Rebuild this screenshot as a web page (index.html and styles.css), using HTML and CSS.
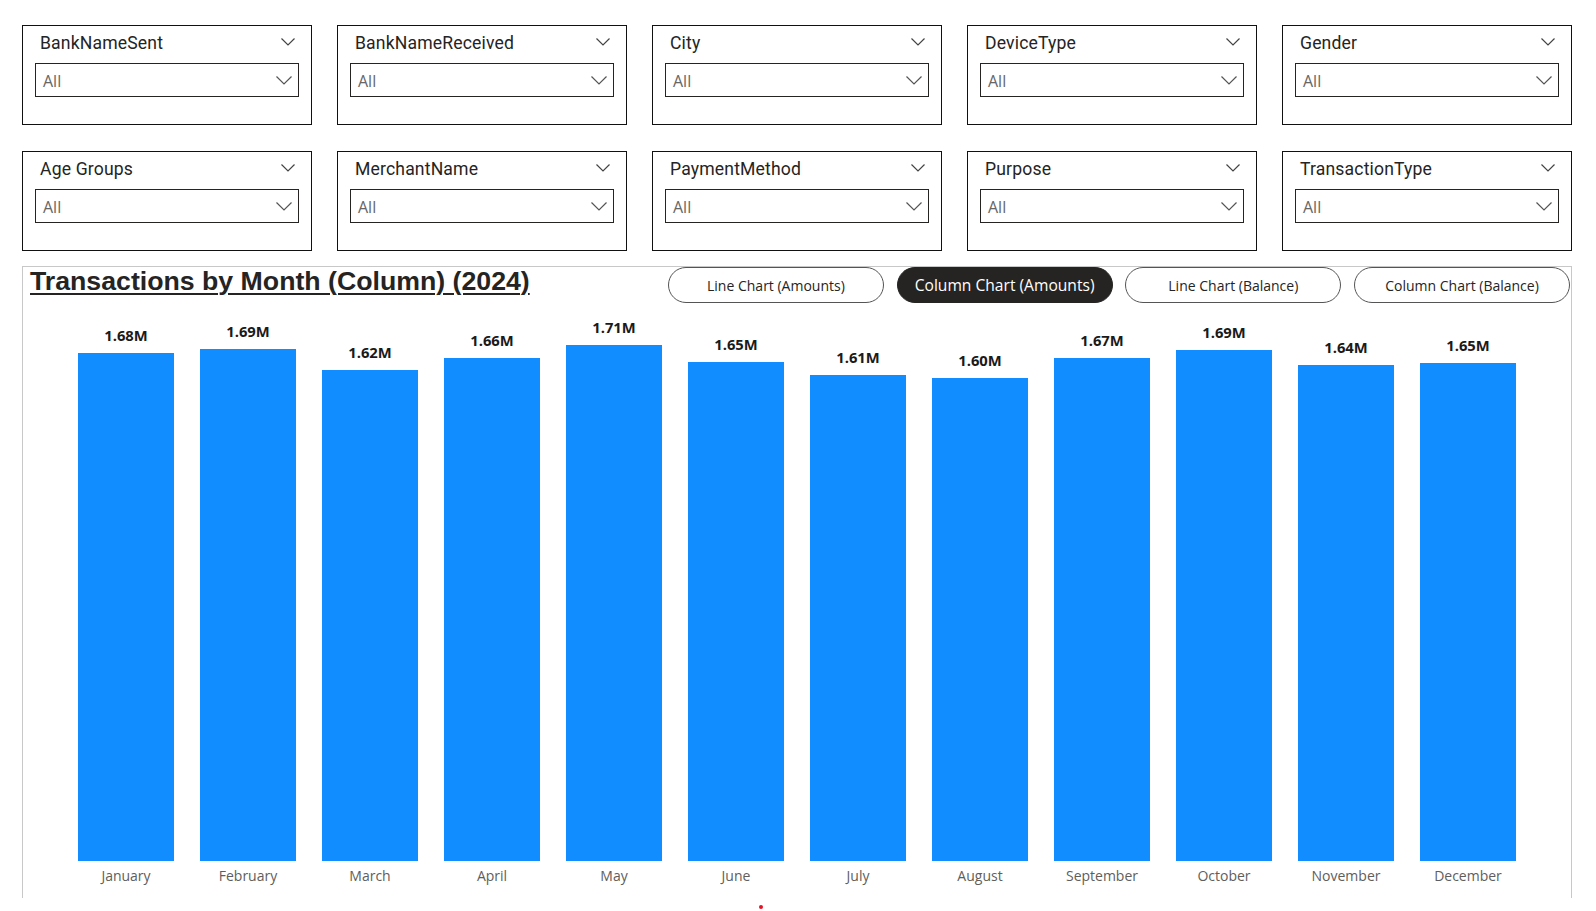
FILE: index.html
```html
<!DOCTYPE html>
<html lang="en">
<head>
<meta charset="utf-8">
<title>Transactions by Month</title>
<link rel="stylesheet" href="styles.css">
</head>
<body>
<div class="page">
  <div class="slicers">
    <div class="slicer"><div class="slicer-head"><span class="slicer-title">BankNameSent</span><svg class="chev-sm" viewBox="0 0 14 8"><polyline points="0.5,0.5 7,7 13.5,0.5"/></svg></div><div class="slicer-box"><span class="slicer-val">All</span><svg class="chev" viewBox="0 0 16 9"><polyline points="0.5,0.5 8,8 15.5,0.5"/></svg></div></div>
    <div class="slicer"><div class="slicer-head"><span class="slicer-title">BankNameReceived</span><svg class="chev-sm" viewBox="0 0 14 8"><polyline points="0.5,0.5 7,7 13.5,0.5"/></svg></div><div class="slicer-box"><span class="slicer-val">All</span><svg class="chev" viewBox="0 0 16 9"><polyline points="0.5,0.5 8,8 15.5,0.5"/></svg></div></div>
    <div class="slicer"><div class="slicer-head"><span class="slicer-title">City</span><svg class="chev-sm" viewBox="0 0 14 8"><polyline points="0.5,0.5 7,7 13.5,0.5"/></svg></div><div class="slicer-box"><span class="slicer-val">All</span><svg class="chev" viewBox="0 0 16 9"><polyline points="0.5,0.5 8,8 15.5,0.5"/></svg></div></div>
    <div class="slicer"><div class="slicer-head"><span class="slicer-title">DeviceType</span><svg class="chev-sm" viewBox="0 0 14 8"><polyline points="0.5,0.5 7,7 13.5,0.5"/></svg></div><div class="slicer-box"><span class="slicer-val">All</span><svg class="chev" viewBox="0 0 16 9"><polyline points="0.5,0.5 8,8 15.5,0.5"/></svg></div></div>
    <div class="slicer"><div class="slicer-head"><span class="slicer-title">Gender</span><svg class="chev-sm" viewBox="0 0 14 8"><polyline points="0.5,0.5 7,7 13.5,0.5"/></svg></div><div class="slicer-box"><span class="slicer-val">All</span><svg class="chev" viewBox="0 0 16 9"><polyline points="0.5,0.5 8,8 15.5,0.5"/></svg></div></div>
    <div class="slicer"><div class="slicer-head"><span class="slicer-title">Age Groups</span><svg class="chev-sm" viewBox="0 0 14 8"><polyline points="0.5,0.5 7,7 13.5,0.5"/></svg></div><div class="slicer-box"><span class="slicer-val">All</span><svg class="chev" viewBox="0 0 16 9"><polyline points="0.5,0.5 8,8 15.5,0.5"/></svg></div></div>
    <div class="slicer"><div class="slicer-head"><span class="slicer-title">MerchantName</span><svg class="chev-sm" viewBox="0 0 14 8"><polyline points="0.5,0.5 7,7 13.5,0.5"/></svg></div><div class="slicer-box"><span class="slicer-val">All</span><svg class="chev" viewBox="0 0 16 9"><polyline points="0.5,0.5 8,8 15.5,0.5"/></svg></div></div>
    <div class="slicer"><div class="slicer-head"><span class="slicer-title">PaymentMethod</span><svg class="chev-sm" viewBox="0 0 14 8"><polyline points="0.5,0.5 7,7 13.5,0.5"/></svg></div><div class="slicer-box"><span class="slicer-val">All</span><svg class="chev" viewBox="0 0 16 9"><polyline points="0.5,0.5 8,8 15.5,0.5"/></svg></div></div>
    <div class="slicer"><div class="slicer-head"><span class="slicer-title">Purpose</span><svg class="chev-sm" viewBox="0 0 14 8"><polyline points="0.5,0.5 7,7 13.5,0.5"/></svg></div><div class="slicer-box"><span class="slicer-val">All</span><svg class="chev" viewBox="0 0 16 9"><polyline points="0.5,0.5 8,8 15.5,0.5"/></svg></div></div>
    <div class="slicer"><div class="slicer-head"><span class="slicer-title">TransactionType</span><svg class="chev-sm" viewBox="0 0 14 8"><polyline points="0.5,0.5 7,7 13.5,0.5"/></svg></div><div class="slicer-box"><span class="slicer-val">All</span><svg class="chev" viewBox="0 0 16 9"><polyline points="0.5,0.5 8,8 15.5,0.5"/></svg></div></div>
  </div>

  <div class="panel">
    <div class="panel-head">
      <h1 class="chart-title">Transactions by Month (Column) (2024)</h1>
      <div class="btns">
        <button class="btn">Line Chart (Amounts)</button>
        <button class="btn active">Column Chart (Amounts)</button>
        <button class="btn">Line Chart (Balance)</button>
        <button class="btn">Column Chart (Balance)</button>
      </div>
    </div>
    <div class="plot">
      <div class="col"><span class="val">1.68M</span><div class="bar" style="height:508px"></div><span class="month">January</span></div>
      <div class="col"><span class="val">1.69M</span><div class="bar" style="height:512px"></div><span class="month">February</span></div>
      <div class="col"><span class="val">1.62M</span><div class="bar" style="height:491px"></div><span class="month">March</span></div>
      <div class="col"><span class="val">1.66M</span><div class="bar" style="height:503px"></div><span class="month">April</span></div>
      <div class="col"><span class="val">1.71M</span><div class="bar" style="height:516px"></div><span class="month">May</span></div>
      <div class="col"><span class="val">1.65M</span><div class="bar" style="height:499px"></div><span class="month">June</span></div>
      <div class="col"><span class="val">1.61M</span><div class="bar" style="height:486px"></div><span class="month">July</span></div>
      <div class="col"><span class="val">1.60M</span><div class="bar" style="height:483px"></div><span class="month">August</span></div>
      <div class="col"><span class="val">1.67M</span><div class="bar" style="height:503px"></div><span class="month">September</span></div>
      <div class="col"><span class="val">1.69M</span><div class="bar" style="height:511px"></div><span class="month">October</span></div>
      <div class="col"><span class="val">1.64M</span><div class="bar" style="height:496px"></div><span class="month">November</span></div>
      <div class="col"><span class="val">1.65M</span><div class="bar" style="height:498px"></div><span class="month">December</span></div>
    </div>
  </div>
  <span class="dot"></span>
</div>
</body>
</html>
```

FILE: styles.css
```css
* { box-sizing: border-box; }
html, body { margin: 0; padding: 0; background: #fff; }
body { width: 1596px; height: 911px; overflow: hidden; font-family: "Open Sans", "Liberation Sans", sans-serif; color: #252423; }

.page { position: relative; width: 1596px; height: 911px; padding: 25px 0 0 22px; }

.slicers {
  display: grid;
  grid-template-columns: repeat(5, 290px);
  column-gap: 25px;
  row-gap: 26px;
}
.slicer {
  height: 100px;
  border: 1.5px solid #111;
  padding: 0 12px;
}
.slicer-head {
  height: 30px;
  margin: 2px 4px 5px 5px;
  display: flex;
  align-items: center;
  justify-content: space-between;
}
.slicer-title {
  font-family: Roboto, "Liberation Sans", sans-serif;
  font-size: 17.6px;
  color: #252423;
  letter-spacing: 0.15px;
}
.chev-sm { width: 14px; height: 8px; fill: none; stroke: #444; stroke-width: 1.2; margin-top: -3px; }
.slicer-box {
  height: 34px;
  border: 1.5px solid #252423;
  display: flex;
  align-items: center;
  justify-content: space-between;
  padding: 1px 6px 0 7px;
}
.slicer-val { font-size: 16px; color: #666; }
.chev { width: 16px; height: 9px; fill: none; stroke: #555; stroke-width: 1.2; }

.panel {
  margin-top: 15px;
  width: 1550px;
  height: 632px;
  border: 1px solid #c8c8c8;
  border-bottom: none;
  display: flex;
  flex-direction: column;
}
.panel-head {
  display: flex;
  justify-content: space-between;
  align-items: flex-start;
  padding: 0 1px 0 7px;
}
.chart-title {
  margin: 0;
  font-family: "Liberation Sans", Arial, sans-serif;
  font-weight: bold;
  font-size: 26.7px;
  line-height: 28px;
  color: #252423;
  text-decoration: underline;
  text-decoration-thickness: 2px;
  text-underline-offset: 3px;
}
.btns { display: flex; gap: 12.7px; }
.btn {
  width: 216px;
  height: 36px;
  border: 1.5px solid #555;
  border-radius: 18px;
  background: #fff;
  font-family: "Open Sans", sans-serif;
  font-size: 14px;
  color: #252423;
  padding: 0;
  cursor: pointer;
}
.btn.active { background: #252423; border-color: #252423; color: #fff; font-size: 15.6px; }

.plot {
  flex: 1;
  display: grid;
  grid-template-columns: repeat(12, 122px);
  padding-left: 42px;
}
.col {
  display: flex;
  flex-direction: column;
  align-items: center;
  justify-content: flex-end;
}
.val {
  font-weight: 700;
  font-size: 14.8px;
  line-height: 18px;
  color: #1b1a19;
  margin-bottom: 9px;
}
.bar { width: 96px; background: #118dff; }
.month {
  height: 37px;
  padding-top: 6px;
  font-size: 14px;
  line-height: 18px;
  color: #605e5c;
}
.dot {
  position: absolute;
  left: 759px;
  top: 905px;
  width: 4px;
  height: 4px;
  border-radius: 50%;
  background: #e81123;
}
```
